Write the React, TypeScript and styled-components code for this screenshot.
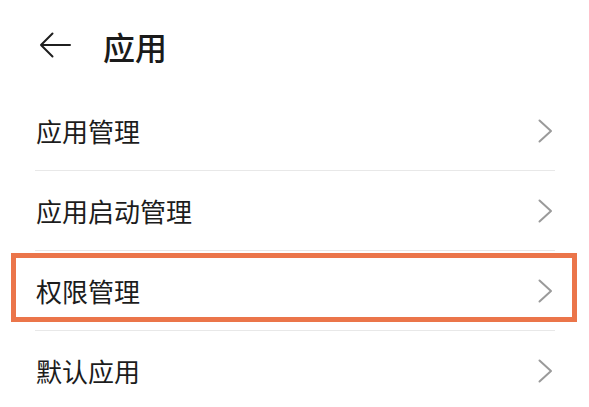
import React from "react";
import styled, { createGlobalStyle } from "styled-components";

const Global = createGlobalStyle`
  html, body { margin: 0; padding: 0; background: #ffffff; }
  body { font-family: "Noto Sans CJK SC", "Noto Sans", sans-serif; color: #1c1c1c; }
`;

const Page = styled.div`
  width: 589px;
  height: 407px;
  overflow: hidden;
  background: #ffffff;
`;

const Header = styled.header`
  height: 91px;
  display: flex;
  align-items: center;
  padding-left: 39px;
  box-sizing: border-box;
`;

const BackButton = styled.button`
  border: 0;
  background: none;
  padding: 0;
  width: 32px;
  height: 26px;
  display: flex;
  align-items: center;
  cursor: pointer;
  margin-right: 32px;
  margin-top: -2px;
`;

const Title = styled.h1`
  margin: 0;
  font-size: 32px;
  font-weight: 500;
  line-height: 1;
  color: #1a1a1a;
  margin-top: 1px;
`;

const List = styled.ul`
  list-style: none;
  margin: 0 34px 0 35px;
  padding: 0;
`;

const Row = styled.li<{ $last?: boolean }>`
  position: relative;
  height: 80px;
  display: flex;
  align-items: center;
  justify-content: space-between;
  border-bottom: ${(p) => (p.$last ? "none" : "1px solid #e8e8e8")};
  box-sizing: border-box;
`;

const Label = styled.span`
  font-size: 26px;
  line-height: 1;
  color: #1c1c1c;
  padding-left: 1px;
`;

const Chevron = styled.svg`
  width: 15px;
  height: 24px;
  margin-right: 2px;
`;

const Highlight = styled.div`
  position: absolute;
  left: -24px;
  top: 2px;
  width: 566px;
  height: 69px;
  border: 5px solid #eb754a;
  box-sizing: border-box;
  pointer-events: none;
`;

const items = ["应用管理", "应用启动管理", "权限管理", "默认应用"];

export default function App() {
  return (
    <Page>
      <Global />
      <Header>
        <BackButton aria-label="返回">
          <svg width="32" height="26" viewBox="0 0 32 26" fill="none">
            <path d="M31 13H2M13.5 1.5L2 13L13.5 24.5" stroke="#1f1f1f" strokeWidth="2" strokeLinecap="round" strokeLinejoin="round" />
          </svg>
        </BackButton>
        <Title>应用</Title>
      </Header>
      <List>
        {items.map((label, i) => (
          <Row key={label} $last={i === items.length - 1}>
            <Label>{label}</Label>
            <Chevron viewBox="0 0 15 24" fill="none">
              <path d="M1.5 1.5L13 12L1.5 22.5" stroke="#9a9a9a" strokeWidth="2" strokeLinecap="round" strokeLinejoin="round" />
            </Chevron>
            {i === 2 && <Highlight />}
          </Row>
        ))}
      </List>
    </Page>
  );
}
